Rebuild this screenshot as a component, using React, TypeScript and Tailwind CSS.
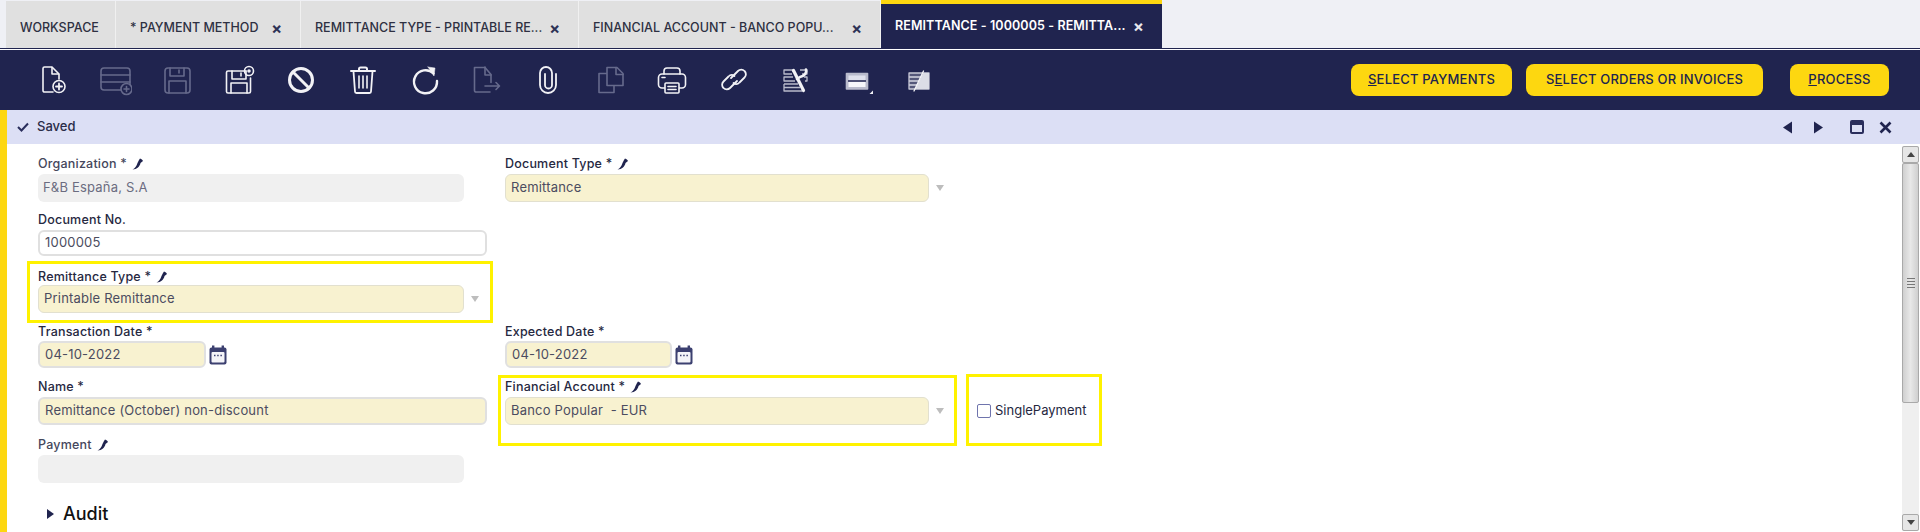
import React from "react";

const NAVY = "#20244f";

function Ico({ dim, children }: { dim?: boolean; children: React.ReactNode }) {
  return (
    <div className="flex w-[61.8px] shrink-0 justify-center">
      <svg
        width="32"
        height="32"
        viewBox="0 0 32 32"
        fill="none"
        stroke={dim ? "#666a8c" : "#f2f2f6"}
        strokeWidth="1.6"
        strokeLinejoin="round"
        strokeLinecap="round"
      >
        {children}
      </svg>
    </div>
  );
}

function Toolbar() {
  return (
    <div className="flex items-center pl-[23px]">
      <Ico>
        <path d="M15 28H6.5a1.5 1.5 0 0 1-1.500-1.500V4.500A1.500 1.500 0 0 1 6.500 3H14l7 7v5" />
        <path d="M14 3.500v6.500h6.500" />
        <circle cx="21" cy="22.500" r="6" />
        <path d="M21 19.500v6M18 22.500h6" strokeWidth="1.800" />
      </Ico>
      <Ico dim>
        <rect x="1" y="4" width="29" height="22" rx="3" />
        <path d="M1 11h29M1 18h29" />
        <circle cx="26.500" cy="25" r="5.500" fill={NAVY} />
        <path d="M26.500 22.500v5M24 25h5" />
      </Ico>
      <Ico dim>
        <rect x="4" y="4" width="25" height="25" rx="3" />
        <path d="M9 4v8h14V4M8 29V17h17v12M18 6v3" />
      </Ico>
      <Ico>
        <path d="M23 7H5a1.500 1.500 0 0 0-1.500 1.500v19A1.500 1.500 0 0 0 5 29h21a1.500 1.500 0 0 0 1.500-1.500V14" />
        <path d="M9 7v8h14V7M8 29V19h16v10M18 9v3" />
        <circle cx="26" cy="7" r="4.500" />
        <circle cx="26" cy="7" r="1" fill="#f2f2f6" />
      </Ico>
      <Ico>
        <circle cx="16" cy="16" r="11.500" strokeWidth="3" />
        <path d="M8 8l16 16" strokeWidth="3" />
      </Ico>
      <Ico>
        <path d="M4 7h24M12 7V5a1.500 1.500 0 0 1 1.500-1.500h5A1.500 1.500 0 0 1 20 5v2" strokeWidth="2" />
        <path d="M6.500 7.500l1.500 20a1.500 1.500 0 0 0 1.500 1.500h13a1.500 1.500 0 0 0 1.500-1.500l1.500-20" strokeWidth="1.800" />
        <path d="M12 12v12M16 12v12M20 12v12" strokeWidth="1.600" />
      </Ico>
      <Ico>
        <path d="M24.500 9.500A11.500 11.500 0 1 0 28 17" strokeWidth="2.400" />
        <path d="M19 3l7 1-1 8-6-9z" fill="#f2f2f6" strokeWidth="0.500" />
      </Ico>
      <Ico dim>
        <path d="M20 28H6a1.500 1.500 0 0 1-1.500-1.500v-23H15l6 7v8" />
        <path d="M15 3v8h6M15 22h14M26 18.500l3.500 3.500-3.500 3.500" />
      </Ico>
      <Ico>
        <path d="M24 10v11a8 8 0 0 1-16 0V9a6 6 0 0 1 12 0v12a3.500 3.500 0 0 1-7 0V10" strokeWidth="1.800" />
      </Ico>
      <Ico dim>
        <path d="M13 9.500H5v19h15v-7" />
        <path d="M15 3.500h8l6 6v12H13v-18z" fill={NAVY} />
        <path d="M22 3.500v7h7" />
      </Ico>
      <Ico>
        <path d="M8 10V7a3 3 0 0 1 3-3h10a3 3 0 0 1 3 3v3" strokeWidth="1.600" />
        <rect x="2.500" y="10" width="27" height="14" rx="3.500" />
        <rect x="9" y="19" width="14" height="10" fill={NAVY} rx="1" />
        <path d="M6 13.500h3M12 22.500h8M12 25.500h8" />
      </Ico>
      <Ico>
        <path d="M13 14l7-7a4.500 4.500 0 0 1 6.500 0 4.500 4.500 0 0 1 0 6.500l-5 5a4.500 4.500 0 0 1-6 .5" strokeWidth="1.800" />
        <path d="M19 17l-7 7a4.500 4.500 0 0 1-6.500 0 4.500 4.500 0 0 1 0-6.500l5-5a4.500 4.500 0 0 1 6-.5" strokeWidth="1.800" />
      </Ico>
      <Ico>
        <g stroke="#b9bbcc" strokeWidth="1.300" strokeLinecap="butt">
          <path d="M14 6H5v4h8M21 6h7v4h-5" />
          <path d="M14 13H5v4h11M25 13h3v4h-2" />
          <path d="M5 20h14M5 20v7h18M5 23.500h16" />
        </g>
        <path d="M14.500 6.500l10 20" strokeWidth="3.200" />
        <path d="M27 5.500c1 3.500-1.500 6.500-6 7.500l-3 2" strokeWidth="2.600" />
      </Ico>
      <Ico>
        <rect x="5.500" y="9.500" width="21" height="15.500" fill="#b9bbcc" stroke="#b9bbcc" strokeWidth="1.600" />
        <path d="M7.500 11.500h17v4.500h-17z" fill="#dfe1ec" stroke="none" />
        <path d="M7.500 18h17v5h-17z" fill="#f6f6fa" stroke="none" />
        <path d="M7 17h18" stroke={NAVY} strokeWidth="1.400" strokeLinecap="butt" />
        <path d="M32 30h-3.500l3.500-3.500z" fill="#f2f2f6" stroke="none" />
      </Ico>
      <Ico>
        <rect x="6" y="9" width="20" height="16" fill="#55587a" stroke="#c9cad8" strokeWidth="1.300" />
        <path d="M6.500 13h12M6.500 17h10M6.500 21h8" stroke="#d5d6e2" strokeWidth="1.300" />
        <path d="M20 9h6v16H12z" fill="#dcdde6" stroke="none" />
        <path d="M20.500 7l-9.500 20" stroke="#f5f5f8" strokeWidth="1.300" />
      </Ico>
    </div>
  );
}

function Pencil() {
  return (
    <svg width="12" height="12" viewBox="0 0 12 12" className="shrink-0">
      <path d="M0.500 11.500C3 10.500 4.500 8 5.500 5L7 2L8 0.500C9.500 1 10.500 2 11 3L8.500 5C8 8 5 11.500 0.500 11.500z" fill={NAVY} />
    </svg>
  );
}

function Label({ text, pencil, dark = true }: { text: string; pencil?: boolean; dark?: boolean }) {
  return (
    <div
      className={`flex h-[14px] items-center gap-[5px] text-[12.5px] font-medium tracking-[0.2px] whitespace-pre ${
        dark ? "text-[#26283f]" : "text-[#45475c]"
      }`}
    >
      <span>{text}</span>
      {pencil && <Pencil />}
    </div>
  );
}

function Arrow() {
  return (
    <svg width="10" height="8" viewBox="0 0 10 8" className="ml-[6px] shrink-0">
      <path d="M1 1h8L5 7z" fill="#bdbdbd" />
    </svg>
  );
}

function Calendar() {
  return (
    <svg width="18" height="20" viewBox="0 0 18 20" className="ml-[3px] shrink-0">
      <rect x="0.500" y="2.500" width="17" height="17" rx="2" fill="#3c4070" />
      <rect x="2.500" y="7" width="13" height="10.500" rx="1" fill="#f4f4f8" />
      <rect x="3" y="0.500" width="2.400" height="4" fill="#3c4070" />
      <rect x="12.600" y="0.500" width="2.400" height="4" fill="#3c4070" />
      <path d="M5 10.500h1.500M8.200 10.500h1.500M11.400 10.500h1.500" stroke="#3c4070" strokeWidth="1.300" />
    </svg>
  );
}

const SINGLE = "border border-[#e2e0cf] bg-[#f8f2d0] text-[#4b4c60]";
const DOUBLE = "border-2 border-[#e0e0e0] bg-[#f8f2d0] text-[#4b4c60]";

function Field({
  w,
  h,
  cls,
  value,
}: {
  w: string;
  h: string;
  cls: string;
  value?: string;
}) {
  return (
    <div className={`flex ${w} ${h} items-center rounded-[6px] pl-[5px] text-[13px] tracking-[0.2px] whitespace-pre ${cls}`}>
      {value}
    </div>
  );
}

function Tab({ w, text, close = true, closeMr = "mr-[18px]" }: { w: string; text: string; close?: boolean; closeMr?: string }) {
  return (
    <div className={`flex ${w} h-[47px] shrink-0 items-center border-r border-[#f0f0f0] bg-[#e0e0e0] pl-[14px] pt-[7px] text-[12.5px] font-medium whitespace-pre text-[#2e3042]`}>
      <span className="flex-1">{text}</span>
      {close && <span className={`${closeMr} text-[16px] leading-none font-bold text-[#2e3255]`}>×</span>}
    </div>
  );
}

function Btn({ w, pre, u, post }: { w: string; pre?: string; u: string; post: string }) {
  return (
    <div className={`flex ${w} h-[32px] items-center justify-center rounded-[8px] bg-[#fdd710] text-[13px] font-medium tracking-[0.2px] whitespace-pre text-[#20244f]`}>
      {pre}
      <span className="underline">{u}</span>
      {post}
    </div>
  );
}

function Highlight({ cls }: { cls: string }) {
  return <div className={`pointer-events-none absolute border-[3px] border-[#fff200] ${cls}`} />;
}

function ScrollBtn({ up }: { up?: boolean }) {
  return (
    <div className="flex h-[17px] w-[17px] items-center justify-center rounded-[2px] border border-[#a9a9a9] bg-[#e6e6e6]">
      <svg width="8" height="5" viewBox="0 0 8 5">
        <path d={up ? "M0 5h8L4 0z" : "M0 0h8L4 5z"} fill="#444" />
      </svg>
    </div>
  );
}

export default function App() {
  return (
    <div className="flex h-[532px] w-[1920px] flex-col overflow-hidden bg-white font-['Inter','Noto_Sans',sans-serif]">
      {/* Tabs */}
      <div className="flex h-[49px] shrink-0 items-end border-b border-[#20244f] bg-[#eff0f5] pl-[6px] pt-px">
        <Tab w="w-[110px]" text="WORKSPACE" close={false} />
        <Tab w="w-[185px]" text="* PAYMENT METHOD" />
        <Tab w="w-[278px]" text="REMITTANCE TYPE - PRINTABLE RE..." />
        <Tab w="w-[302px]" text="FINANCIAL ACCOUNT - BANCO POPU..." />
        <div className="flex h-[48px] w-[281px] shrink-0 items-center border-t-4 border-[#fdd710] bg-[#20244f] pl-[14px] text-[12.5px] font-semibold tracking-[0.1px] whitespace-pre text-white">
          <span className="flex-1">REMITTANCE - 1000005 - REMITTA...</span>
          <span className="mr-[18px] text-[16px] leading-none font-bold text-[#e8e8ee]">×</span>
        </div>
      </div>
      <div className="h-[1px] shrink-0 bg-white" />
      {/* Toolbar */}
      <div className="flex h-[60px] shrink-0 items-center justify-between bg-[#20244f] pr-[31px]">
        <Toolbar />
        <div className="flex items-center">
          <Btn w="w-[161px]" u="S" post="ELECT PAYMENTS" />
          <div className="w-[14px]" />
          <Btn w="w-[237px]" pre="S" u="E" post="LECT ORDERS OR INVOICES" />
          <div className="w-[27px]" />
          <Btn w="w-[99px]" u="P" post="ROCESS" />
        </div>
      </div>
      {/* Body */}
      <div className="flex min-h-0 flex-1 border-l-[7px] border-[#fdd710]">
        <div className="flex min-w-0 flex-1 flex-col">
          {/* Status */}
          <div className="flex h-[34px] shrink-0 items-center bg-[#dcdff5] pl-[10px] pr-[28px]">
            <svg width="12" height="10" viewBox="0 0 12 10" fill="none" className="shrink-0">
              <path d="M1 5l3.500 3.500L11 1.500" stroke="#2a2e5c" strokeWidth="2" />
            </svg>
            <span className="ml-[8px] text-[13px] font-medium text-[#2a2c48]">Saved</span>
            <div className="flex-1" />
            <svg width="9" height="13" viewBox="0 0 9 12" className="mr-[22px]">
              <path d="M9 0v12L0 6z" fill={NAVY} />
            </svg>
            <svg width="9" height="13" viewBox="0 0 9 12" className="mr-[27px]">
              <path d="M0 0v12l9-6z" fill={NAVY} />
            </svg>
            <svg width="14" height="14" viewBox="0 0 14 14" className="mr-[15px]">
              <rect x="0" y="0" width="14" height="14" rx="2" fill="#2a2e5c" />
              <rect x="2" y="5" width="10" height="7" fill="#dcdff5" />
            </svg>
            <svg width="13" height="13" viewBox="0 0 13 13">
              <path d="M1.500 1.500l10 10M11.500 1.500l-10 10" stroke={NAVY} strokeWidth="2.600" />
            </svg>
          </div>
          {/* Form */}
          <div className="relative min-h-0 flex-1 pl-[31px]">
            <Highlight cls="left-[20px] top-[117px] h-[62px] w-[466px]" />
            <Highlight cls="left-[491px] top-[231px] h-[71px] w-[459px]" />
            <Highlight cls="left-[959px] top-[230px] h-[72px] w-[136px]" />
            <div className="flex h-[57px] items-start pt-[13px]">
              <div className="w-[467px]">
                <Label text="Organization *" pencil dark={false} />
                <Field w="w-[426px]" h="h-[28px] mt-[3px]" cls="bg-[#f0f0f0] text-[#6b6c80]" value="F&B España, S.A" />
              </div>
              <div>
                <Label text="Document Type *" pencil />
                <div className="mt-[3px] flex items-center">
                  <Field w="w-[424px]" h="h-[28px]" cls={SINGLE} value="Remittance" />
                  <Arrow />
                </div>
              </div>
            </div>
            <div className="h-[55px] pt-[12px]">
              <Label text="Document No." />
              <Field
                w="w-[449px]"
                h="h-[26px] mt-[3px]"
                cls="border-2 border-[#e0e0e0] bg-white text-[#4b4c60]"
                value="1000005"
              />
            </div>
            <div className="h-[57px] pt-[14px]">
              <Label text="Remittance Type *" pencil />
              <div className="mt-[1px] flex items-center">
                <Field w="w-[426px]" h="h-[28px]" cls={SINGLE} value="Printable Remittance" />
                <Arrow />
              </div>
            </div>
            <div className="flex h-[55px] items-start pt-[12px]">
              <div className="w-[467px]">
                <Label text="Transaction Date *" />
                <div className="mt-[2px] flex items-center">
                  <Field w="w-[168px]" h="h-[27px]" cls={DOUBLE} value="04-10-2022" />
                  <Calendar />
                </div>
              </div>
              <div>
                <Label text="Expected Date *" />
                <div className="mt-[2px] flex items-center">
                  <Field w="w-[167px]" h="h-[27px]" cls={DOUBLE} value="04-10-2022" />
                  <Calendar />
                </div>
              </div>
            </div>
            <div className="flex h-[58px] items-start pt-[12px]">
              <div className="w-[467px]">
                <Label text="Name *" />
                <Field w="w-[449px]" h="h-[28px] mt-[3px]" cls={DOUBLE} value="Remittance (October) non-discount" />
              </div>
              <div>
                <Label text="Financial Account *" pencil />
                <div className="mt-[3px] flex items-center">
                  <Field w="w-[424px]" h="h-[28px]" cls={SINGLE} value="Banco Popular  - EUR" />
                  <Arrow />
                  <div className="ml-[32px] flex items-center">
                    <div className="h-[14px] w-[14px] rounded-[2px] border border-[#6f74ad] bg-white" />
                    <span className="ml-[4px] text-[13px] text-[#26283f]">SinglePayment</span>
                  </div>
                </div>
              </div>
            </div>
            <div className="pt-[12px]">
              <Label text="Payment" pencil dark={false} />
              <Field w="w-[426px]" h="h-[28px] mt-[3px]" cls="bg-[#f0f0f0]" />
            </div>
            <div className="mt-[20px] flex items-center pl-[9px]">
              <svg width="7" height="10" viewBox="0 0 7 10" className="shrink-0">
                <path d="M0 0v10l7-5z" fill={NAVY} />
              </svg>
              <span className="ml-[9px] text-[18px] leading-[22px] font-medium text-[#111]">Audit</span>
            </div>
          </div>
        </div>
      </div>
      {/* scrollbar overlays the body's right edge */}
      <div className="absolute left-[1902px] top-[146px] flex h-[385px] w-[17px] flex-col bg-[#efefef]">
        <ScrollBtn up />
        <div className="flex h-[240px] items-center justify-center rounded-[2px] border border-[#a9a9a9] bg-gradient-to-r from-[#cfcfcf] via-[#e8e8e8] to-[#cfcfcf]">
          <div className="flex w-[8px] flex-col gap-[2px]">
            <div className="h-[1px] bg-[#777]" />
            <div className="h-[1px] bg-[#777]" />
            <div className="h-[1px] bg-[#777]" />
            <div className="h-[1px] bg-[#777]" />
          </div>
        </div>
        <div className="flex-1" />
        <ScrollBtn />
      </div>
    </div>
  );
}
